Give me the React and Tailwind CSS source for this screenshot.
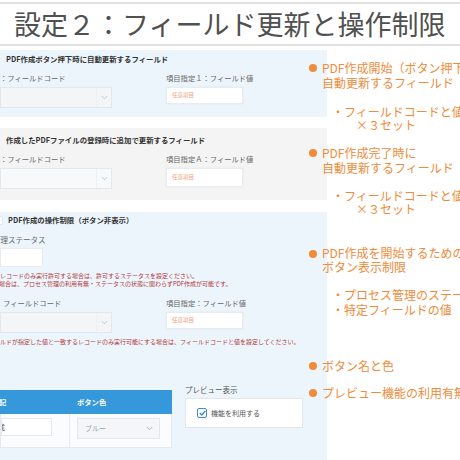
import React from "react";

const Chevron = ({ color = "#a9c9e8" }) => (
  <svg width="7" height="5" viewBox="0 0 7 5">
    <polyline points="0.8,1 3.5,3.8 6.2,1" fill="none" stroke={color} strokeWidth="0.9" />
  </svg>
);

function FieldRow({ left, right, selectBg = "bg-[#f3f5f7]", inputH = "h-[17px]", leftShift = "" }) {
  return (
    <div className="flex">
      <div className="w-[112px] shrink-0">
        <div className={`text-[7.3px] leading-[12px] text-[#666] whitespace-nowrap ${leftShift}`}>{left}</div>
        <div className={`mt-[3px] h-[21px] flex border border-[#e3e8ed] ${selectBg}`}>
          <div className="flex-1" />
          <div className="w-[15px] flex items-center justify-center border-l border-[#eef1f4]">
            <Chevron />
          </div>
        </div>
      </div>
      <div className="ml-[54px] w-[77px] shrink-0">
        <div className="text-[7.3px] leading-[12px] text-[#666] whitespace-nowrap">{right}</div>
        <div className={`mt-[3px] ${inputH} flex items-center pl-[5px] bg-white border border-[#e9ecef] shadow-[0_0_2px_rgba(0,0,0,0.06)] text-[5.5px] text-[#f2a07c]`}>
          任意項目
        </div>
      </div>
    </div>
  );
}

function Annot({ lines, lead = "leading-[15px]", mt }) {
  return (
    <div className={`flex ${mt}`}>
      <div className="w-[13px] h-[15px] flex items-center shrink-0">
        <div className="w-[8px] h-[8px] rounded-full bg-[#ef8b3a]" />
      </div>
      <div className={`text-[12px] ${lead} whitespace-nowrap`}>
        {lines.map((l, i) => (
          <div key={i}>{l}</div>
        ))}
      </div>
    </div>
  );
}

export default function App() {
  return (
    <div className="w-[460px] h-[460px] overflow-hidden bg-white relative font-['Noto_Sans_CJK_JP','Noto_Sans',sans-serif]">
      {/* Title */}
      <div className="mt-[2px] h-[44px] border-y-2 border-[#e2e2e2] pl-[14px] text-[27px] leading-[40px] text-[#505050] whitespace-nowrap">
        設定２：フィールド更新と操作制限
      </div>

      {/* Left panel */}
      <div className="w-[327px] mt-[4px]">
        {/* Section 1 */}
        <div className="h-[67px] bg-[#edf5fc] pt-[3px] overflow-hidden">
          <div className="pl-[6px] text-[7.4px] font-bold leading-[12px] text-[#333] whitespace-nowrap">
            PDF作成ボタン押下時に自動更新するフィールド
          </div>
          <div className="mt-[7px]">
            <FieldRow left="：フィールドコード" right="項目指定１：フィールド値" />
          </div>
        </div>

        {/* Section 2 */}
        <div className="mt-[11px] h-[72px] bg-[#f4f4f4] pt-[6px] overflow-hidden">
          <div className="pl-[6px] text-[7.4px] font-bold leading-[12px] text-[#333] whitespace-nowrap">
            作成したPDFファイルの登録時に追加で更新するフィールド
          </div>
          <div className="mt-[7px]">
            <FieldRow left="：フィールドコード" right="項目指定Ａ：フィールド値" selectBg="bg-[#f8f9fb]" inputH="h-[19px]" />
          </div>
        </div>

        {/* Section 3 */}
        <div className="mt-[12px] h-[248px] bg-[#edf5fc] pt-[2px] overflow-hidden">
          <div className="flex items-center h-[12px]">
            <div className="ml-[-6px] w-[9px] h-[9px] rounded-[2px] bg-white border border-[#dfe6ee] shrink-0" />
            <div className="ml-[5px] text-[7.4px] font-bold text-[#333] whitespace-nowrap">
              PDF作成の操作制限（ボタン非表示）
            </div>
          </div>
          <div className="mt-[8px] ml-[-7px] text-[7.5px] leading-[12px] text-[#666] whitespace-nowrap">
            管理ステータス
          </div>
          <div className="mt-[2px] w-[43px] h-[19px] bg-white border border-[#e9edf1]" />
          <div className="mt-[5px] text-[6px] leading-[8px] text-[#b0393b] whitespace-nowrap">
            <div>レコードのみ実行許可する場合は、許可するステータスを設定ください。</div>
            <div className="ml-[-1px]">場合は、プロセス管理の利用有無・ステータスの状態に関わらずPDF作成が可能です。</div>
          </div>
          <div className="mt-[9px]">
            <FieldRow left="フィールドコード" right="項目指定：フィールド値" leftShift="ml-[3px]" />
          </div>
          <div className="mt-[5px] text-[6px] leading-[8px] text-[#b0393b] whitespace-nowrap">
            ルドが指定した値と一致するレコードのみ実行可能にする場合は、フィールドコードと値を設定してください。
          </div>

          <div className="mt-[38px] flex items-start">
            {/* Table */}
            <div className="mt-[6px] w-[172px] shrink-0">
              <div className="h-[24px] bg-[#3498db] flex items-center text-[7.3px] font-bold text-white">
                <div className="w-[69px] ml-[-1px]">記</div>
                <div className="pl-[9px]">ボタン色</div>
              </div>
              <div className="h-[34px] flex bg-[#fbfcfd] border-x border-b border-[#e6e9ed]">
                <div className="w-[69px] pt-[4px] border-r border-[#e6e9ed]">
                  <div className="w-[51px] h-[18px] bg-white border border-[#e6e9ec] flex items-center overflow-hidden">
                    <span className="ml-[-4px] text-[7px] text-[#555]">成</span>
                  </div>
                </div>
                <div className="pl-[7px] pt-[4px]">
                  <div className="w-[83px] h-[21px] bg-[#f4f6f8] border border-[#e3e7eb] flex items-center justify-between pl-[7px] pr-[6px]">
                    <span className="text-[7px] text-[#8fa3b8]">ブルー</span>
                    <Chevron color="#9db4cb" />
                  </div>
                </div>
              </div>
            </div>

            {/* Preview */}
            <div className="ml-[13px] w-[118px] shrink-0">
              <div className="text-[7.5px] leading-[12px] text-[#555] whitespace-nowrap">プレビュー表示</div>
              <div className="mt-[2px] h-[30px] bg-white border border-[#e3e7eb] flex items-center pl-[11px]">
                <div className="w-[10px] h-[10px] rounded-[2px] border-[1.5px] border-[#3b8fd8] bg-white flex items-center justify-center">
                  <svg width="7" height="6" viewBox="0 0 7 6">
                    <polyline points="0.8,3 2.8,5 6.2,0.8" fill="none" stroke="#2f86d4" strokeWidth="1.3" />
                  </svg>
                </div>
                <span className="ml-[4px] text-[7px] text-[#555] whitespace-nowrap">機能を利用する</span>
              </div>
            </div>
          </div>
        </div>
      </div>

      {/* Annotations overlay */}
      <div className="absolute left-[309px] top-0 w-[151px] text-[#ef8b3a]">
        <Annot mt="mt-[60px]" lines={["PDF作成開始（ボタン押下）", "自動更新するフィールド"]} />
        <div className="mt-[15px] pl-[23px] text-[12px] leading-[13px] whitespace-nowrap">
          <div>・フィールドコードと値</div>
          <div className="pl-[24px]">×３セット</div>
        </div>
        <Annot mt="mt-[14px]" lines={["PDF作成完了時に", "自動更新するフィールド"]} />
        <div className="mt-[14px] pl-[23px] text-[12px] leading-[13px] whitespace-nowrap">
          <div>・フィールドコードと値</div>
          <div className="pl-[24px]">×３セット</div>
        </div>
        <Annot mt="mt-[31px]" lead="leading-[14px]" lines={["PDF作成を開始するための", "ボタン表示制限"]} />
        <div className="mt-[13px] pl-[23px] text-[12px] leading-[15px] whitespace-nowrap">
          <div>・プロセス管理のステータス</div>
          <div>・特定フィールドの値</div>
        </div>
        <Annot mt="mt-[41px]" lines={["ボタン名と色"]} />
        <Annot mt="mt-[12px]" lines={["プレビュー機能の利用有無"]} />
      </div>
    </div>
  );
}
